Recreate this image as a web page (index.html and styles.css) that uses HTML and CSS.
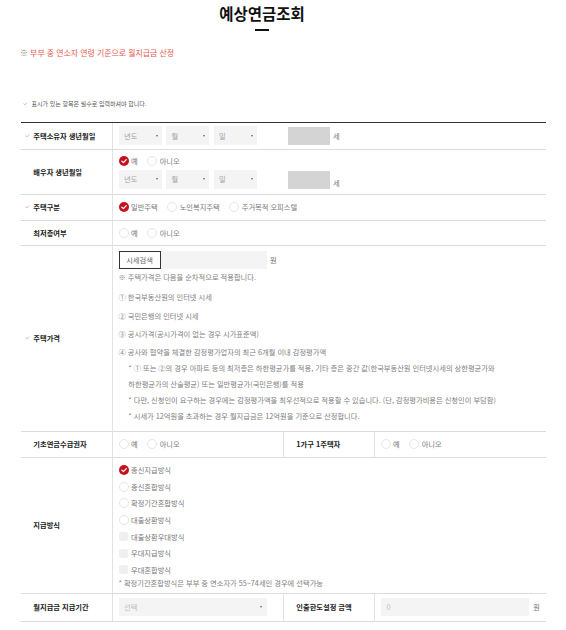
FILE: index.html
```html
<!DOCTYPE html>
<html lang="ko">
<head>
<meta charset="utf-8">
<title>예상연금조회</title>
<link rel="stylesheet" href="styles.css">
</head>
<body>
<div class="page">
  <header class="head">
    <h1 class="title">예상연금조회</h1>
    <span class="title-bar"></span>
  </header>

  <p class="notice"><span class="notice-mark">※</span> 부부 중 연소자 연령 기준으로 월지급금 산정</p>

  <p class="req"><svg class="req-chk" viewBox="0 0 5 4"><path d="M0.5 1.9 L2 3.3 L4.5 0.7" /></svg>표시가 있는 항목은 필수로 입력하셔야 합니다.</p>

  <div class="form">
    <!-- row 1 -->
    <div class="th"><svg class="chk" viewBox="0 0 5 4"><path d="M0.5 1.9 L2 3.3 L4.5 0.7" /></svg>주택소유자 생년월일</div>
    <div class="td wide">
      <div class="sel">년도</div>
      <div class="sel">월</div>
      <div class="sel">일</div>
      <div class="age"></div>
      <span class="unit">세</span>
    </div>

    <!-- row 2 -->
    <div class="th">배우자 생년월일</div>
    <div class="td wide stack">
      <div class="radios">
        <label class="opt"><svg class="rd-on" viewBox="0 0 10 10"><circle cx="5" cy="5" r="5"/><path d="M2.8 5.1 L4.4 6.6 L7.3 3.6"/></svg>예</label>
        <label class="opt"><span class="rd"></span>아니오</label>
      </div>
      <div class="selrow">
        <div class="sel">년도</div>
        <div class="sel">월</div>
        <div class="sel">일</div>
        <div class="age"></div>
        <span class="unit">세</span>
      </div>
    </div>

    <!-- row 3 -->
    <div class="th"><svg class="chk" viewBox="0 0 5 4"><path d="M0.5 1.9 L2 3.3 L4.5 0.7" /></svg>주택구분</div>
    <div class="td wide">
      <div class="radios">
        <label class="opt"><svg class="rd-on" viewBox="0 0 10 10"><circle cx="5" cy="5" r="5"/><path d="M2.8 5.1 L4.4 6.6 L7.3 3.6"/></svg>일반주택</label>
        <label class="opt"><span class="rd"></span>노인복지주택</label>
        <label class="opt"><span class="rd"></span>주거목적 오피스텔</label>
      </div>
    </div>

    <!-- row 4 -->
    <div class="th">최저층여부</div>
    <div class="td wide">
      <div class="radios">
        <label class="opt"><span class="rd"></span>예</label>
        <label class="opt"><span class="rd"></span>아니오</label>
      </div>
    </div>

    <!-- row 5 -->
    <div class="th"><svg class="chk" viewBox="0 0 5 4"><path d="M0.5 1.9 L2 3.3 L4.5 0.7" /></svg>주택가격</div>
    <div class="td wide price">
      <div class="price-line">
        <span class="btn">시세검색</span>
        <span class="inp inp-price"></span>
        <span class="unit">원</span>
      </div>
      <p class="pnote">※ 주택가격은 다음을 순차적으로 적용합니다.</p>
      <p class="pitem">① 한국부동산원의 인터넷 시세</p>
      <p class="pitem">② 국민은행의 인터넷 시세</p>
      <p class="pitem">③ 공시가격(공시가격이 없는 경우 시가표준액)</p>
      <p class="pitem">④ 공사와 협약을 체결한 감정평가업자의 최근 6개월 이내 감정평가액</p>
      <p class="psub">* ① 또는 ②의 경우 아파트 등의 최저층은 하한평균가를 적용, 기타 층은 중간 값(한국부동산원 인터넷시세의 상한평균가와<br>하한평균가의 산술평균) 또는 일반평균가(국민은행)를 적용</p>
      <p class="psub">* 다만, 신청인이 요구하는 경우에는 감정평가액을 최우선적으로 적용할 수 있습니다. (단, 감정평가비용은 신청인이 부담함)</p>
      <p class="psub">* 시세가 12억원을 초과하는 경우 월지급금은 12억원을 기준으로 산정합니다.</p>
    </div>

    <!-- row 6 -->
    <div class="th">기초연금수급권자</div>
    <div class="td half">
      <div class="radios">
        <label class="opt"><span class="rd"></span>예</label>
        <label class="opt"><span class="rd"></span>아니오</label>
      </div>
    </div>
    <div class="th">1가구 1주택자</div>
    <div class="td">
      <div class="radios">
        <label class="opt"><span class="rd"></span>예</label>
        <label class="opt"><span class="rd"></span>아니오</label>
      </div>
    </div>

    <!-- row 7 -->
    <div class="th">지급방식</div>
    <div class="td wide method">
      <label class="mopt"><svg class="rd-on" viewBox="0 0 10 10"><circle cx="5" cy="5" r="5"/><path d="M2.8 5.1 L4.4 6.6 L7.3 3.6"/></svg>종신지급방식</label>
      <label class="mopt"><span class="rd"></span>종신혼합방식</label>
      <label class="mopt"><span class="rd"></span>확정기간혼합방식</label>
      <label class="mopt"><span class="rd"></span>대출상환방식</label>
      <label class="mopt"><span class="rd off"></span>대출상환우대방식</label>
      <label class="mopt"><span class="rd off"></span>우대지급방식</label>
      <label class="mopt"><span class="rd off"></span>우대혼합방식</label>
      <p class="mnote">* 확정기간혼합방식은 부부 중 연소자가 55~74세인 경우에 선택가능</p>
    </div>

    <!-- row 8 -->
    <div class="th">월지급금 지급기간</div>
    <div class="td half">
      <div class="sel sel-long">선택</div>
    </div>
    <div class="th">인출한도설정 금액</div>
    <div class="td">
      <span class="inp inp-amount">0</span>
      <span class="unit unit-won">원</span>
    </div>
  </div>
</div>
</body>
</html>
```

FILE: styles.css
```css
html, body {
  margin: 0;
  padding: 0;
  background: #ffffff;
}

body {
  font-family: "Noto Sans CJK KR", "Noto Sans", "Liberation Sans", sans-serif;
  color: #777777;
  font-size: 7.25px;
  line-height: 12px;
}

.page {
  width: 566px;
}

/* ---------- header ---------- */
.head {
  width: 524px;
  display: flex;
  flex-direction: column;
  align-items: center;
  padding-top: 3px;
}

.title {
  margin: 0;
  font-size: 15.5px;
  line-height: 20px;
  font-weight: 700;
  color: #111111;
}

.title-bar {
  display: block;
  width: 14px;
  height: 2px;
  margin-top: 6px;
  background: #111111;
}

.notice {
  margin: 16px 0 0 20px;
  font-size: 7.9px;
  line-height: 12px;
  color: #e5584c;
}

.notice-mark {
  color: #777777;
}

.req {
  margin: 39.5px 0 0 23px;
  font-size: 6px;
  line-height: 10px;
  color: #555555;
  display: flex;
  align-items: center;
}

.req-chk {
  width: 4.5px;
  height: 3.6px;
  margin-right: 4px;
}

.req-chk path,
.chk path {
  fill: none;
  stroke: #ec8a90;
  stroke-width: 0.8;
}

/* ---------- form grid ---------- */
.form {
  margin: 13px 0 0 21px;
  width: 525px;
  display: grid;
  grid-template-columns: 92px 171px 91px 171px;
  grid-template-rows: 27px 45px 26px 25px 186px 26px 136px 28px;
  border-top: 1px solid #333333;
}

.th,
.td {
  box-sizing: border-box;
  border-bottom: 1px solid #dcdcdc;
  display: flex;
  align-items: center;
}

.th {
  padding-left: 12.3px;
  border-right: 1px solid #e2e2e2;
  font-weight: 700;
  color: #222222;
}

.chk {
  width: 4.5px;
  height: 3.6px;
  margin-left: -8.3px;
  margin-right: 3.8px;
}

.td {
  padding-left: 5.5px;
}

.td.wide {
  grid-column: span 3;
}

.td.half {
  border-right: 1px solid #e2e2e2;
}

.td.stack {
  flex-direction: column;
  align-items: flex-start;
  justify-content: center;
  gap: 3px;
}

.selrow {
  display: flex;
  align-items: flex-end;
}

/* selects */
.sel {
  box-sizing: border-box;
  width: 43px;
  height: 19px;
  margin-right: 4.5px;
  padding: 0 4px 0 5.5px;
  background: #f4f4f4;
  display: flex;
  align-items: center;
  justify-content: space-between;
  color: #a3a3a3;
}

.sel::after {
  content: "";
  border-left: 1.5px solid transparent;
  border-right: 1.5px solid transparent;
  border-top: 2px solid #666666;
}

.sel-long {
  width: 148px;
  height: 18.4px;
  margin-right: 0;
  color: #bdbdbd;
  padding-right: 5px;
}

.age {
  width: 42px;
  height: 18px;
  margin-left: 26.5px;
  background: #d4d4d4;
}

.unit {
  margin-left: 3.5px;
  color: #777777;
}

/* radios */
.radios {
  display: flex;
  align-items: center;
  height: 12px;
}

.opt {
  display: flex;
  align-items: center;
  margin-right: 9.5px;
}

.rd,
.rd-on {
  flex: none;
  box-sizing: border-box;
  width: 10px;
  height: 10px;
  margin-right: 2.5px;
}

.rd {
  border-radius: 50%;
  border: 1px solid #e6e6e6;
  background: #ffffff;
}

.rd.off {
  border-radius: 2px;
  border: none;
  background: #efefef;
  width: 9px;
  height: 9px;
  margin-left: 0.5px;
  margin-right: 3px;
}

.rd-on circle {
  fill: #c3121e;
}

.rd-on path {
  fill: none;
  stroke: #ffffff;
  stroke-width: 1.3;
  stroke-linecap: round;
  stroke-linejoin: round;
}

/* price row */
.td.price {
  flex-direction: column;
  align-items: flex-start;
  justify-content: flex-start;
  padding-top: 5.7px;
}

.price-line {
  display: flex;
  align-items: center;
}

.btn {
  box-sizing: border-box;
  width: 42px;
  height: 17.6px;
  border: 1px solid #333333;
  display: flex;
  align-items: center;
  justify-content: center;
  color: #666666;
  background: #ffffff;
}

.inp {
  box-sizing: border-box;
  display: flex;
  align-items: center;
  background: #f4f4f4;
}

.inp-price {
  width: 106px;
  height: 17.6px;
}

.pnote,
.pitem,
.psub {
  margin: 0;
  line-height: 16px;
  color: #808080;
  white-space: nowrap;
}

.pnote {
  margin-bottom: 2.3px;
}

.pitem {
  margin-top: 2.3px;
}

.psub {
  padding-left: 9.8px;
}

/* method row */
.td.method {
  flex-direction: column;
  align-items: flex-start;
  justify-content: center;
}

.mopt {
  display: flex;
  align-items: center;
  height: 16.6px;
}

.mnote {
  margin: 0;
  line-height: 10px;
  color: #808080;
}

/* amount */
.inp-amount {
  width: 148px;
  height: 18.4px;
  padding-left: 6px;
  color: #c4c4c4;
}

.unit-won {
  margin-left: 4.7px;
}
```
